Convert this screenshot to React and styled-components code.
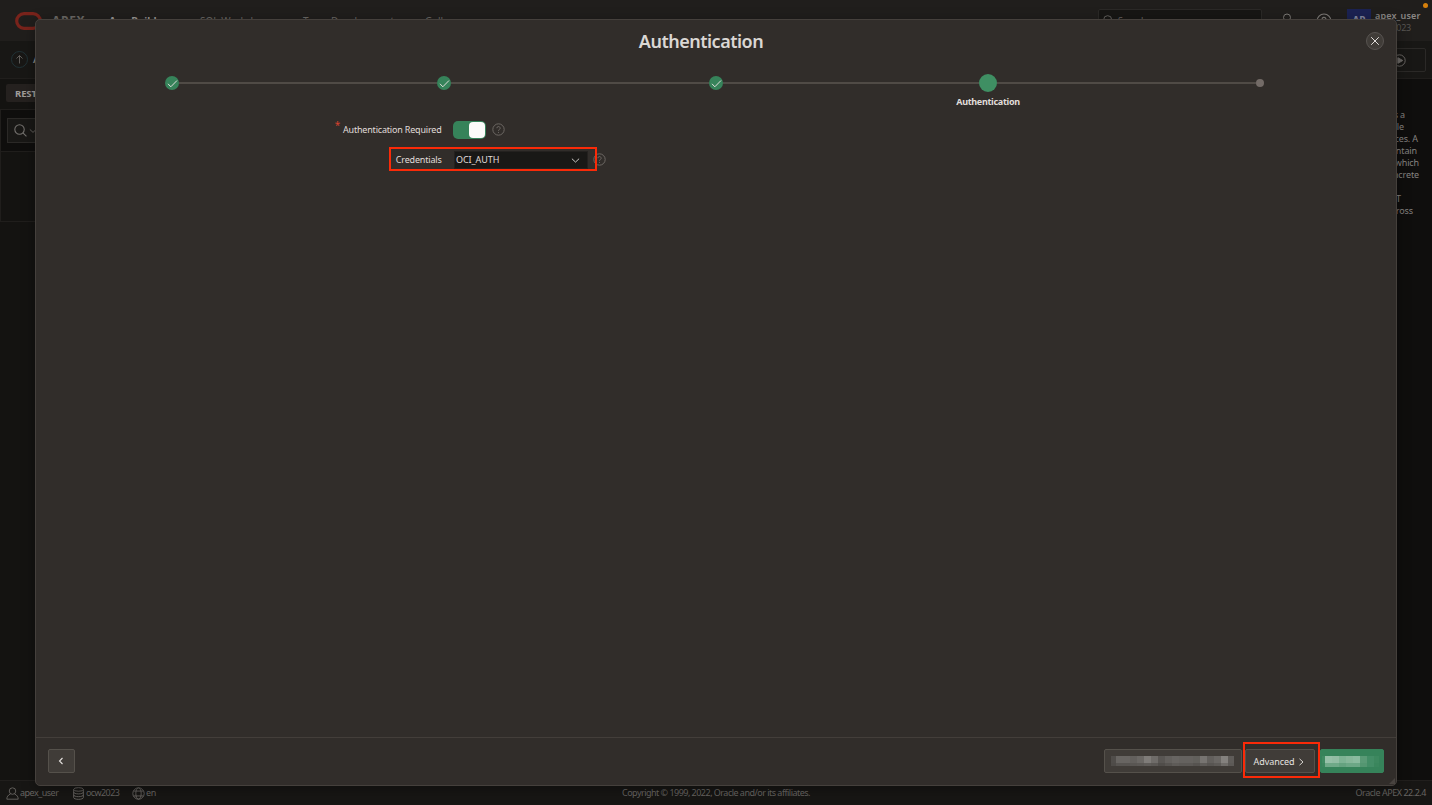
import React from "react";
import styled, { createGlobalStyle } from "styled-components";

const Global = createGlobalStyle`
  * { box-sizing: border-box; }
  html, body { margin: 0; background: #141311; overflow: hidden; }
  body { font-family: "Noto Sans", "Open Sans", sans-serif; font-size: 9px; line-height: 12px; }
`;

const Page = styled.div`
  position: relative;
  width: 1432px;
  height: 805px;
  overflow: hidden;
  display: flex;
  flex-direction: column;
  background: #141311;
  color: #8a8784;
`;

const Label = styled.span`
  white-space: nowrap;
  letter-spacing: ${(p) => p.$ls || 0}px;
`;

/* page behind the dialog */
const TopBar = styled.header`
  height: 41px;
  flex: none;
  display: flex;
  align-items: flex-start;
  background: #201e1c;
  padding: 0 11px 0 15px;
`;
const Brand = styled.div`
  display: flex;
  width: 94px;
  padding-top: 12px;
  gap: 10px;
  font-size: 12px;
  line-height: 18px;
  font-weight: 700;
  color: #6b6865;
`;
const Nav = styled.nav`
  display: grid;
  grid-template-columns: 91px 103px 122px 100px;
  padding-top: 15px;
  font-size: 10px;
  color: #6b6865;
  flex: 1;
`;
const NavItem = styled.span`
  font-weight: ${(p) => (p.$active ? 700 : 400)};
  color: ${(p) => (p.$active ? "#9a9794" : "#6b6865")};
`;
const SearchBox = styled.div`
  width: 164px;
  height: 24px;
  margin: 9px 23px 0 0;
  padding: 5px 4px;
  display: flex;
  gap: 4px;
  border: 1px solid #2b2927;
  border-radius: 2px;
  background: #171614;
  color: #6b6865;
`;
const IconSlot = styled.div`
  width: ${(p) => p.$w}px;
  padding-top: 13px;
  color: #7d7a77;
`;
const Avatar = styled.div`
  width: 24px;
  height: 24px;
  margin-top: 9px;
  padding-top: 5px;
  text-align: center;
  font-size: 10px;
  font-weight: 700;
  background: #1b2252;
  color: #83869c;
`;
const Account = styled.div`
  width: 50px;
  padding: 10px 0 0 4px;
  display: flex;
  flex-direction: column;
  color: #8a8784;
`;
const Strong = styled.span`
  font-weight: 600;
  letter-spacing: 0.15px;
`;
const Muted = styled.span`
  color: #595653;
  letter-spacing: -0.2px;
`;
const NotifyDot = styled.i`
  position: absolute;
  left: 1423px;
  top: 3px;
  width: 5px;
  height: 5px;
  border-radius: 50%;
  background: #d6800c;
`;
const CrumbBar = styled.div`
  height: 38px;
  flex: none;
  display: flex;
  align-items: center;
  justify-content: space-between;
  padding: 0 6px 0 11px;
  background: #181715;
  border-bottom: 1px solid #201e1c;
`;
const Crumb = styled.div`
  display: flex;
  align-items: center;
  gap: 5px;
  font-weight: 700;
  color: #8f8c89;
`;
const RunButton = styled.div`
  width: 44px;
  height: 24px;
  padding: 5px 10px;
  border: 1px solid #2b2927;
  border-radius: 2px;
  color: #6b6865;
`;
const Body = styled.div`
  flex: 1;
  display: flex;
  justify-content: space-between;
`;
const LeftPane = styled.div`
  width: 300px;
  display: flex;
  flex-direction: column;
`;
const TabRow = styled.div`
  height: 30px;
  padding: 5px 6px;
`;
const Tab = styled.div`
  width: 80px;
  height: 18px;
  padding: 4px 9px;
  border-radius: 2px;
  background: #25211f;
  font-size: 9.5px;
  letter-spacing: -0.1px;
  font-weight: 700;
  color: #a09d9a;
`;
const Report = styled.div`
  height: 113px;
  border: 1px solid #201e1c;
`;
const ReportTools = styled.div`
  height: 42px;
  padding: 8px 6px;
  background: #0f0e0d;
  border-bottom: 1px solid #201e1c;
`;
const FilterBox = styled.div`
  height: 25px;
  display: flex;
  align-items: center;
  gap: 2px;
  padding-left: 6px;
  border: 1px solid #2b2927;
  background: #191816;
  color: #75726f;
`;
const HelpPane = styled.aside`
  width: 100px;
  padding-top: 30px;
  background: #0f0e0d;
  display: flex;
  flex-direction: column;
`;
const HelpLine = styled.span`
  height: 12px;
  text-align: right;
  padding-right: ${(p) => p.$end}px;
  letter-spacing: -0.12px;
  color: #858280;
`;
const StatusBar = styled.footer`
  height: 25px;
  flex: none;
  display: grid;
  grid-template-columns: 1fr 1fr 1fr;
  align-items: center;
  padding: 0 6px;
  background: #171614;
  border-top: 1px solid #211f1d;
  color: #686562;
  text-align: center;
`;
const StatusGroup = styled.div`
  display: flex;
  align-items: center;
  justify-content: ${(p) => (p.$end ? "flex-end" : "flex-start")};
`;
const StatusItem = styled.div`
  display: flex;
  align-items: center;
  gap: 1px;
  width: ${(p) => p.$w}px;
`;

/* dialog */
const Dialog = styled.section`
  position: absolute;
  left: 35px;
  top: 19px;
  width: 1362px;
  height: 767px;
  display: flex;
  flex-direction: column;
  border: 1px solid #45403c;
  border-radius: 5px;
  background: #312d2a;
  color: #e0ddda;
  box-shadow: 0 3px 14px rgba(0, 0, 0, 0.35);
`;
const DialogHead = styled.div`
  height: 42px;
  display: grid;
  grid-template-columns: 1fr auto 1fr;
  align-items: center;
  padding: 0 12px;
`;
const Title = styled.h1`
  grid-column: 2;
  margin: 0 30px 0 0;
  font-size: 18px;
  line-height: 24px;
  font-weight: 600;
  letter-spacing: -0.5px;
  color: #dad7d4;
`;
const Close = styled.button`
  justify-self: end;
  width: 18px;
  height: 18px;
  padding: 0;
  display: flex;
  align-items: center;
  justify-content: center;
  border: 1px solid #575350;
  border-radius: 50%;
  background: #403c38;
  color: #e0ddda;
`;
const Steps = styled.ol`
  margin: 0;
  padding: 12px 0 0;
  height: 58px;
  list-style: none;
  display: grid;
  grid-template-columns: repeat(5, 1fr);
`;
const Step = styled.li`
  display: flex;
  flex-direction: column;
  align-items: center;
  gap: 4px;
  font-weight: 700;
`;
const Track = styled.div`
  width: 100%;
  height: 18px;
  display: flex;
  align-items: center;
`;
const Rule = styled.i`
  flex: 1;
  height: 2px;
  background: ${(p) => (p.$off ? "transparent" : "#504b46")};
`;
const sizes = { done: 14.5, current: 18, next: 8 };
const fills = { done: "#36835a", current: "#3f8f63", next: "#736b67" };
const Marker = styled.div`
  width: ${(p) => sizes[p.$state]}px;
  height: ${(p) => sizes[p.$state]}px;
  border-radius: 50%;
  display: flex;
  align-items: center;
  justify-content: center;
  background: ${(p) => fills[p.$state]};
`;
const Form = styled.div`
  flex: 1;
`;
const Field = styled.div`
  height: 30px;
  display: flex;
  align-items: flex-start;
`;
const FieldLabel = styled.label`
  width: 405.5px;
  padding-top: 4px;
  text-align: right;
  letter-spacing: -0.19px;
  white-space: nowrap;
`;
const Star = styled.sup`
  margin-right: 3px;
  font-size: 10px;
  line-height: 0;
  vertical-align: 4px;
  color: #d5412f;
`;
const Toggle = styled.div`
  width: 33px;
  height: 18px;
  margin: 1px 6px 0 11.500px;
  padding: 1px;
  display: flex;
  justify-content: flex-end;
  border-radius: 5px;
  background: #36835a;
`;
const Knob = styled.i`
  width: 16px;
  height: 16px;
  border-radius: 4px;
  background: #fcfbfa;
`;
const HelpIcon = styled.div`
  width: 14px;
  height: 14px;
  padding-top: 3px;
  color: #6e6965;
`;
const Select = styled.div`
  width: 134px;
  height: 18px;
  margin: 1px 5px 0 12.500px;
  padding: 0 7px 0 1px;
  display: flex;
  align-items: center;
  justify-content: space-between;
  border: 1px solid #24211f;
  background: #191816;
  letter-spacing: -0.05px;
`;
const Highlight = styled.div`
  position: absolute;
  left: ${(p) => p.$x}px;
  top: ${(p) => p.$y}px;
  width: ${(p) => p.$w}px;
  height: ${(p) => p.$h}px;
  border: 2px solid #fa2a08;
`;
const Actions = styled.div`
  height: 48px;
  display: flex;
  align-items: flex-start;
  padding: 11px 12px 0;
  border-top: 1px solid #433e3a;
`;
const Button = styled.button`
  width: ${(p) => p.$w}px;
  height: 24px;
  margin: 0 ${(p) => p.$gap || 0}px 0 ${(p) => (p.$push ? "auto" : 0)};
  padding: ${(p) => p.$pad || "0"};
  display: flex;
  align-items: center;
  justify-content: center;
  gap: 2px;
  font: inherit;
  letter-spacing: -0.05px;
  color: #e6e3e0;
  border: 1px solid ${(p) => (p.$primary ? "#36835a" : "#55514b")};
  border-radius: 2px;
  background: ${(p) => (p.$primary ? "#36835a" : "#403c38")};
`;
const Mosaic = styled.div`
  display: flex;
  height: ${(p) => p.$h}px;
`;
const MosaicCell = styled.i`
  width: ${(p) => p.$w}px;
  background: linear-gradient(${(p) => p.$a} 7px, ${(p) => p.$b} 7px);
`;
const Grip = styled.svg`
  position: absolute;
  right: 1px;
  bottom: 1px;
`;

const Svg = ({ s = 12, vb = 16, w = 1.2, children }) => (
  <svg width={s} height={s} viewBox={`0 0 ${vb} ${vb}`} fill="none" stroke="currentColor" strokeWidth={w} display="block">
    {children}
  </svg>
);
const Help = ({ s = 13 }) => (
  <Svg s={s} w={1.2}>
    <circle cx="8" cy="8" r="7" />
    <path d="M6 6.400a2 2 0 1 1 3 1.700c-.7.4-1 .8-1 1.600M8 11v1.200" />
  </Svg>
);
const Search = ({ s }) => (
  <Svg s={s} w={1.3}>
    <circle cx="6.8" cy="6.8" r="5.8" />
    <path d="M11 11l4.300 4.300" />
  </Svg>
);
const Down = ({ s = 8 }) => (
  <Svg s={s} vb={8} w={0.8}>
    <path d="M.8 2.400L4 5.400l3.200-3" />
  </Svg>
);

const grey = [
  [5, "#504d4a", "#4e4b48"], [14, "#686562", "#575451"], [7, "#63605d", "#595653"], [7, "#6b6865", "#5b5855"],
  [7, "#7f7c79", "#5f5c59"], [7, "#6f6c69", "#5b5855"], [7, "#595653", "#504d4a"],
  [7, "#63605d", "#575451"], [7, "#686562", "#5e5b58"], [14, "#65625f", "#5b5855"], [7, "#62605c", "#565350"],
  [7, "#777471", "#5f5c59"], [7, "#625f5c", "#585552"], [7, "#6a6764", "#5d5a57"],
  [7, "#84817e", "#6f6c69"], [6, "#5f5c59", "#5c5956"],
];
const green = [
  [3, "#408a62", "#3a865d"], [7, "#96c0a8", "#6fa988"], [7, "#92bda4", "#6fa988"], [7, "#7db394", "#65a280"],
  [7, "#86b79a", "#6ca786"], [7, "#8abb9f", "#6ca786"], [7, "#5a9a76", "#549671"], [7, "#438d66", "#438d66"], [5, "#3d885f", "#3a865d"],
];
const Blocks = ({ cells, h }) => (
  <Mosaic $h={h}>
    {cells.map(([w, a, b], i) => (
      <MosaicCell key={i} $w={w} $a={a} $b={b} />
    ))}
  </Mosaic>
);

const helpLines = [
  ["provides a", 27], ["single", 28], ["sources. A", 14], ["contain", 15], ["which", 13], ["concrete", 13], ["", 0], ["REST", 31], ["across", 19],
];
const steps = ["done", "done", "done", "current", "next"];

export default function App() {
  return (
    <Page>
      <Global />
      <TopBar>
        <Brand>
          <svg width="27" height="18" viewBox="0 0 27 18" fill="none">
            <rect x="1.700" y="1.700" width="23.600" height="14.600" rx="7.300" stroke="#79231b" strokeWidth="3.200" />
          </svg>
          <Label $ls={0.7}>APEX</Label>
        </Brand>
        <Nav>
          <NavItem $active>App Builder</NavItem>
          <NavItem>SQL Workshop</NavItem>
          <NavItem>Team Development</NavItem>
          <NavItem>Gallery</NavItem>
        </Nav>
        <SearchBox>
          <Search s={11} />
          <Label>Search</Label>
        </SearchBox>
        <IconSlot $w={31}>
          <svg width="10" height="16" viewBox="6 0 10 16" fill="none" stroke="currentColor" overflow="visible">
            <circle cx="8" cy="4.500" r="3.500" />
            <path d="M2 15c0-4 3-6 6-6s6 2 6 6" />
          </svg>
        </IconSlot>
        <IconSlot $w={31}><Help s={16} /></IconSlot>
        <Avatar>AP</Avatar>
        <Account>
          <Strong>apex_user</Strong>
          <Muted>ocw2023</Muted>
        </Account>
        <NotifyDot />
      </TopBar>
      <CrumbBar>
        <Crumb>
          <svg width="17" height="17" viewBox="0 0 17 17" fill="none">
            <circle cx="8.500" cy="8.500" r="8" stroke="#213236" />
            <path d="M8.500 12.500v-8M5.500 7.500l3-3 3 3" stroke="#5f5c59" />
          </svg>
          Application
        </Crumb>
        <RunButton>
          <Svg s={13}>
            <circle cx="8" cy="8" r="7" />
            <path d="M6 4.500l6 3.500-6 3.500z" fill="currentColor" />
          </Svg>
        </RunButton>
      </CrumbBar>
      <Body>
        <LeftPane>
          <TabRow><Tab>REST Source</Tab></TabRow>
          <Report>
            <ReportTools>
              <FilterBox><Search s={13} /><Down /></FilterBox>
            </ReportTools>
          </Report>
        </LeftPane>
        <HelpPane>
          {helpLines.map(([text, end], i) => (
            <HelpLine key={i} $end={end}>{text}</HelpLine>
          ))}
        </HelpPane>
      </Body>
      <StatusBar>
        <StatusGroup>
          <StatusItem $w={66}>
            <Svg s={13} w={1.1}>
              <circle cx="8" cy="5" r="4" />
              <path d="M5.500 8.500C2.500 10 1 12 1 15h14c0-3-1.500-5-4.500-6.500" />
            </Svg>
            <Label $ls={-0.5}>apex_user</Label>
          </StatusItem>
          <StatusItem $w={60}>
            <Svg s={13} w={1.1}>
              <ellipse cx="8" cy="3" rx="6" ry="2.200" />
              <path d="M2 3v10c0 1.200 2.700 2.200 6 2.200s6-1 6-2.200V3M2 6.300c0 1.200 2.700 2.200 6 2.200s6-1 6-2.200M2 9.700c0 1.200 2.700 2.200 6 2.200s6-1 6-2.200" />
            </Svg>
            <Label $ls={-0.6}>ocw2023</Label>
          </StatusItem>
          <StatusItem $w={40}>
            <Svg s={13} w={1.1}>
              <circle cx="8" cy="8" r="7" />
              <ellipse cx="8" cy="8" rx="3.300" ry="7" />
              <path d="M1.800 5h12.400M1.800 11h12.400" />
            </Svg>
            <Label $ls={-0.3}>en</Label>
          </StatusItem>
        </StatusGroup>
        <Label $ls={-0.52}>Copyright © 1999, 2022, Oracle and/or its affiliates.</Label>
        <StatusGroup $end><Label $ls={-0.47}>Oracle APEX 22.2.4</Label></StatusGroup>
      </StatusBar>

      <Dialog>
        <DialogHead>
          <Title>Authentication</Title>
          <Close><Svg s={10} vb={10} w={1}><path d="M1.200 1.200l7.600 7.600M8.800 1.200L1.200 8.800" /></Svg></Close>
        </DialogHead>
        <Steps>
          {steps.map((state, i) => (
            <Step key={i}>
              <Track>
                <Rule $off={i === 0} />
                <Marker $state={state}>
                  {state === "done" && <Svg s={11} vb={11} w={1}><path d="M1 5.800l2.800 3L10 2.500" /></Svg>}
                </Marker>
                <Rule $off={i === 4} />
              </Track>
              {state === "current" && <Label $ls={-0.3}>Authentication</Label>}
            </Step>
          ))}
        </Steps>
        <Form>
          <Field>
            <FieldLabel><Star>*</Star>Authentication Required</FieldLabel>
            <Toggle><Knob /></Toggle>
            <HelpIcon><Help /></HelpIcon>
          </Field>
          <Field>
            <FieldLabel>Credentials</FieldLabel>
            <Select>OCI_AUTH<Down s={9} /></Select>
            <HelpIcon><Help /></HelpIcon>
          </Field>
        </Form>
        <Actions>
          <Button $w={27} $pad="0 1px 0 0"><Svg s={8} vb={8} w={1.1}><path d="M5.500 1L2.500 4l3 3" /></Svg></Button>
          <Button $w={138} $push $gap={3} $pad="0 2px 0 0"><Blocks cells={grey} h={10} /></Button>
          <Button $w={70} $gap={5} $pad="1px 2px 0 0">Advanced<Svg s={8} vb={8} w={0.9}><path d="M2.500 .8L6 4 2.500 7.200" /></Svg></Button>
          <Button $w={64} $primary $pad="0 3px 0 0"><Blocks cells={green} h={11} /></Button>
        </Actions>
        <Grip width="6" height="6" viewBox="0 0 6 6"><path d="M6 0v6H0z" fill="#48433f" /></Grip>
      </Dialog>
      <Highlight $x={389} $y={147} $w={208} $h={24} />
      <Highlight $x={1243} $y={742} $w={77} $h={36} />
    </Page>
  );
}
